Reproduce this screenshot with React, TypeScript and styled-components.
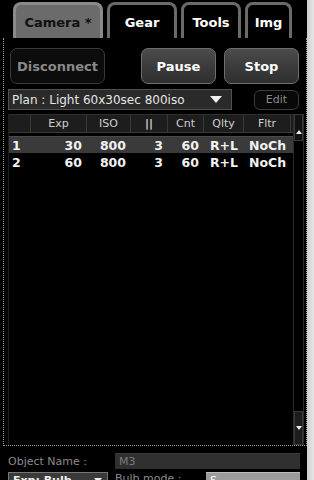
import React from "react";
import styled, { createGlobalStyle } from "styled-components";

const GlobalStyle = createGlobalStyle`
  html, body { margin: 0; padding: 0; background: #000; }
  body { width: 314px; height: 480px; overflow: hidden; font-family: "DejaVu Sans", "Liberation Sans", sans-serif; }
  * { box-sizing: border-box; }
`;

const Page = styled.div`
  display: flex;
  width: 314px;
  height: 480px;
  background: #000;
  overflow: hidden;
`;

const Content = styled.div`
  width: 307px;
  display: flex;
  flex-direction: column;
`;

const RightStrip = styled.div`
  width: 7px;
  background: linear-gradient(90deg, #cfcfcf, #e6e6e6);
`;

const TabBar = styled.div`
  display: flex;
  align-items: flex-end;
  gap: 4px;
  height: 38px;
  padding: 2px 0 0 13px;
`;

const Tab = styled.div<{ $active?: boolean; $w: number }>`
  width: ${(p) => p.$w}px;
  height: 36px;
  border: 3px solid ${(p) => (p.$active ? "#8a8a8a" : "#6a6a6a")};
  border-bottom: none;
  border-radius: 8px 8px 0 0;
  background: ${(p) => (p.$active ? "#6b6b6b" : "#000")};
  color: ${(p) => (p.$active ? "#111" : "#fff")};
  font-weight: bold;
  font-size: 13px;
  display: flex;
  align-items: center;
  justify-content: center;
  padding-top: 1px;
`;

const Frame = styled.div`
  height: 408px;
  margin-left: 3px;
  border-left: 1px dotted #9a9a9a;
  border-right: 1px dotted #9a9a9a;
  border-bottom: 1px dotted #9a9a9a;
  display: flex;
  flex-direction: column;
  padding: 10px 2px 0 4px;
`;

const ButtonRow = styled.div`
  display: flex;
  height: 36px;
  padding: 0 5px 0 2px;
  gap: 8px;
`;

const Button = styled.div<{ $disabled?: boolean; $w: number }>`
  width: ${(p) => p.$w}px;
  height: 36px;
  border-radius: 7px;
  border: 1px solid ${(p) => (p.$disabled ? "#3a3a3a" : "#6e6e6e")};
  background: ${(p) =>
    p.$disabled ? "#0c0c0c" : "linear-gradient(180deg, #4c4c4c 0%, #3a3a3a 55%, #2f2f2f 100%)"};
  color: ${(p) => (p.$disabled ? "#8a8a8a" : "#fff")};
  font-weight: bold;
  font-size: 13px;
  display: flex;
  align-items: center;
  justify-content: center;
`;

const Spacer = styled.div`
  flex: 1;
`;

const PlanRow = styled.div`
  display: flex;
  align-items: center;
  margin-top: 5px;
  height: 21px;
  padding-right: 5px;
`;

const PlanSelect = styled.div`
  width: 224px;
  height: 21px;
  background: #2a2a2a;
  border: 1px solid #505050;
  color: #e6e6e6;
  font-size: 12px;
  display: flex;
  align-items: center;
  padding: 0 9px 0 3px;
`;

const PlanText = styled.span`
  flex: 1;
  white-space: nowrap;
`;

const Caret = styled.span<{ $size?: number }>`
  width: 0;
  height: 0;
  border-left: ${(p) => p.$size ?? 6}px solid transparent;
  border-right: ${(p) => p.$size ?? 6}px solid transparent;
  border-top: ${(p) => (p.$size ?? 6) + 1}px solid #f0f0f0;
`;

const EditButton = styled.div`
  margin-left: auto;
  width: 45px;
  height: 20px;
  border: 1px solid #3c3c3c;
  border-radius: 6px;
  background: #080808;
  color: #8a8a8a;
  font-size: 11px;
  display: flex;
  align-items: center;
  justify-content: center;
`;

const TableBox = styled.div`
  margin-top: 4px;
  height: 332px;
  display: flex;
  border-left: 1px solid #1e1e1e;
`;

const TableBody = styled.div`
  flex: 1;
  display: flex;
  flex-direction: column;
`;

const cols = "22px 56px 44px 37px 36px 40px 47px";

const HeaderRow = styled.div`
  display: grid;
  grid-template-columns: ${cols};
  height: 19px;
  background: #1d1d1d;
  border-top: 1px solid #2e2e2e;
  border-bottom: 1px solid #3a3a3a;
  margin-bottom: 3px;
`;

const HeaderCell = styled.div<{ $heavy?: boolean }>`
  color: #cfcfcf;
  font-size: 11px;
  font-weight: ${(p) => (p.$heavy ? "bold" : "normal")};
  display: flex;
  align-items: center;
  justify-content: center;
  border-right: 1px solid #383838;
`;

const DataRow = styled.div<{ $selected?: boolean }>`
  display: grid;
  grid-template-columns: ${cols};
  height: 17px;
  background: ${(p) => (p.$selected ? "#3a3a3a" : "#000")};
  border-top: 1px solid ${(p) => (p.$selected ? "#4a4a4a" : "#000")};
`;

const DataCell = styled.div<{ $align?: "left" | "right" | "center" }>`
  color: #f2f2f2;
  font-size: 12.5px;
  font-weight: bold;
  display: flex;
  align-items: center;
  justify-content: ${(p) =>
    p.$align === "left" ? "flex-start" : p.$align === "center" ? "center" : "flex-end"};
  padding: ${(p) => (p.$align === "left" ? "0 0 0 3px" : p.$align === "center" ? "0" : "0 5px 0 0")};
  white-space: nowrap;
`;

const ScrollBar = styled.div`
  width: 11px;
  display: flex;
  flex-direction: column;
  border-left: 1px solid #2a2a2a;
  border-right: 1px solid #2a2a2a;
`;

const ScrollButton = styled.div<{ $down?: boolean }>`
  height: ${(p) => (p.$down ? 34 : 27)}px;
  margin-top: ${(p) => (p.$down ? "auto" : "0")};
  background: ${(p) => (p.$down ? "#1c1c1c" : "#121212")};
  border: 1px solid #3a3a3a;
  display: flex;
  justify-content: center;
  align-items: ${(p) => (p.$down ? "center" : "flex-end")};
  padding-bottom: ${(p) => (p.$down ? 0 : 6)}px;
`;

const Arrow = styled.span<{ $up?: boolean }>`
  width: 0;
  height: 0;
  border-left: 3px solid transparent;
  border-right: 3px solid transparent;
  ${(p) => (p.$up ? "border-bottom: 4px solid #eee;" : "border-top: 4px solid #eee;")}
`;

const FieldRow = styled.div`
  display: flex;
  align-items: center;
  height: 16px;
  margin-top: 7px;
  padding: 0 7px 0 8px;
`;

const Label = styled.span<{ $w: number }>`
  width: ${(p) => p.$w}px;
  color: #8a8a8a;
  font-size: 11px;
  white-space: nowrap;
  overflow: hidden;
`;

const TextInput = styled.div<{ $light?: boolean }>`
  flex: 1;
  height: 16px;
  background: ${(p) => (p.$light ? "#9c9c9c" : "#303030")};
  border-top: 1px solid ${(p) => (p.$light ? "#bdbdbd" : "#3a3a3a")};
  color: ${(p) => (p.$light ? "#fff" : "#7a7a7a")};
  font-size: 11px;
  display: flex;
  align-items: center;
  padding-left: 4px;
`;

const BottomRow = styled.div`
  display: flex;
  align-items: flex-start;
  height: 16px;
  margin-top: 3px;
  padding: 0 7px 0 8px;
  gap: 7px;
`;

const SmallSelect = styled.div`
  width: 100px;
  height: 16px;
  background: #3a3a3a;
  border: 1px solid #777;
  color: #f0f0f0;
  font-size: 11px;
  font-weight: bold;
  display: flex;
  align-items: center;
  padding: 0 5px 0 4px;
`;

const rows = [
  { n: "1", exp: "30", iso: "800", p: "3", cnt: "60", q: "R+L", f: "NoCh" },
  { n: "2", exp: "60", iso: "800", p: "3", cnt: "60", q: "R+L", f: "NoCh" },
];

export default function App() {
  return (
    <>
      <GlobalStyle />
      <Page>
        <Content>
          <TabBar>
            <Tab $active $w={90}>Camera *</Tab>
            <Tab $w={70}>Gear</Tab>
            <Tab $w={60}>Tools</Tab>
            <Tab $w={47}>Img</Tab>
          </TabBar>
          <Frame>
            <ButtonRow>
              <Button $disabled $w={95}>Disconnect</Button>
              <Spacer />
              <Button $w={75}>Pause</Button>
              <Button $w={75}>Stop</Button>
            </ButtonRow>
            <PlanRow>
              <PlanSelect>
                <PlanText>Plan : Light 60x30sec 800iso</PlanText>
                <Caret />
              </PlanSelect>
              <EditButton>Edit</EditButton>
            </PlanRow>
            <TableBox>
              <TableBody>
                <HeaderRow>
                  <HeaderCell />
                  <HeaderCell>Exp</HeaderCell>
                  <HeaderCell>ISO</HeaderCell>
                  <HeaderCell $heavy>||</HeaderCell>
                  <HeaderCell>Cnt</HeaderCell>
                  <HeaderCell>Qlty</HeaderCell>
                  <HeaderCell>Fltr</HeaderCell>
                </HeaderRow>
                {rows.map((r, i) => (
                  <DataRow key={r.n} $selected={i === 0}>
                    <DataCell $align="left">{r.n}</DataCell>
                    <DataCell>{r.exp}</DataCell>
                    <DataCell>{r.iso}</DataCell>
                    <DataCell>{r.p}</DataCell>
                    <DataCell>{r.cnt}</DataCell>
                    <DataCell $align="center">{r.q}</DataCell>
                    <DataCell $align="center">{r.f}</DataCell>
                  </DataRow>
                ))}
              </TableBody>
              <ScrollBar>
                <ScrollButton>
                  <Arrow $up />
                </ScrollButton>
                <ScrollButton $down>
                  <Arrow />
                </ScrollButton>
              </ScrollBar>
            </TableBox>
          </Frame>
          <FieldRow>
            <Label $w={107}>Object Name :</Label>
            <TextInput>M3</TextInput>
          </FieldRow>
          <BottomRow>
            <SmallSelect>
              <PlanText>Exp: Bulb</PlanText>
              <Caret $size={4} />
            </SmallSelect>
            <Label $w={84}>Bulb mode :</Label>
            <TextInput $light>S</TextInput>
          </BottomRow>
        </Content>
        <RightStrip />
      </Page>
    </>
  );
}
